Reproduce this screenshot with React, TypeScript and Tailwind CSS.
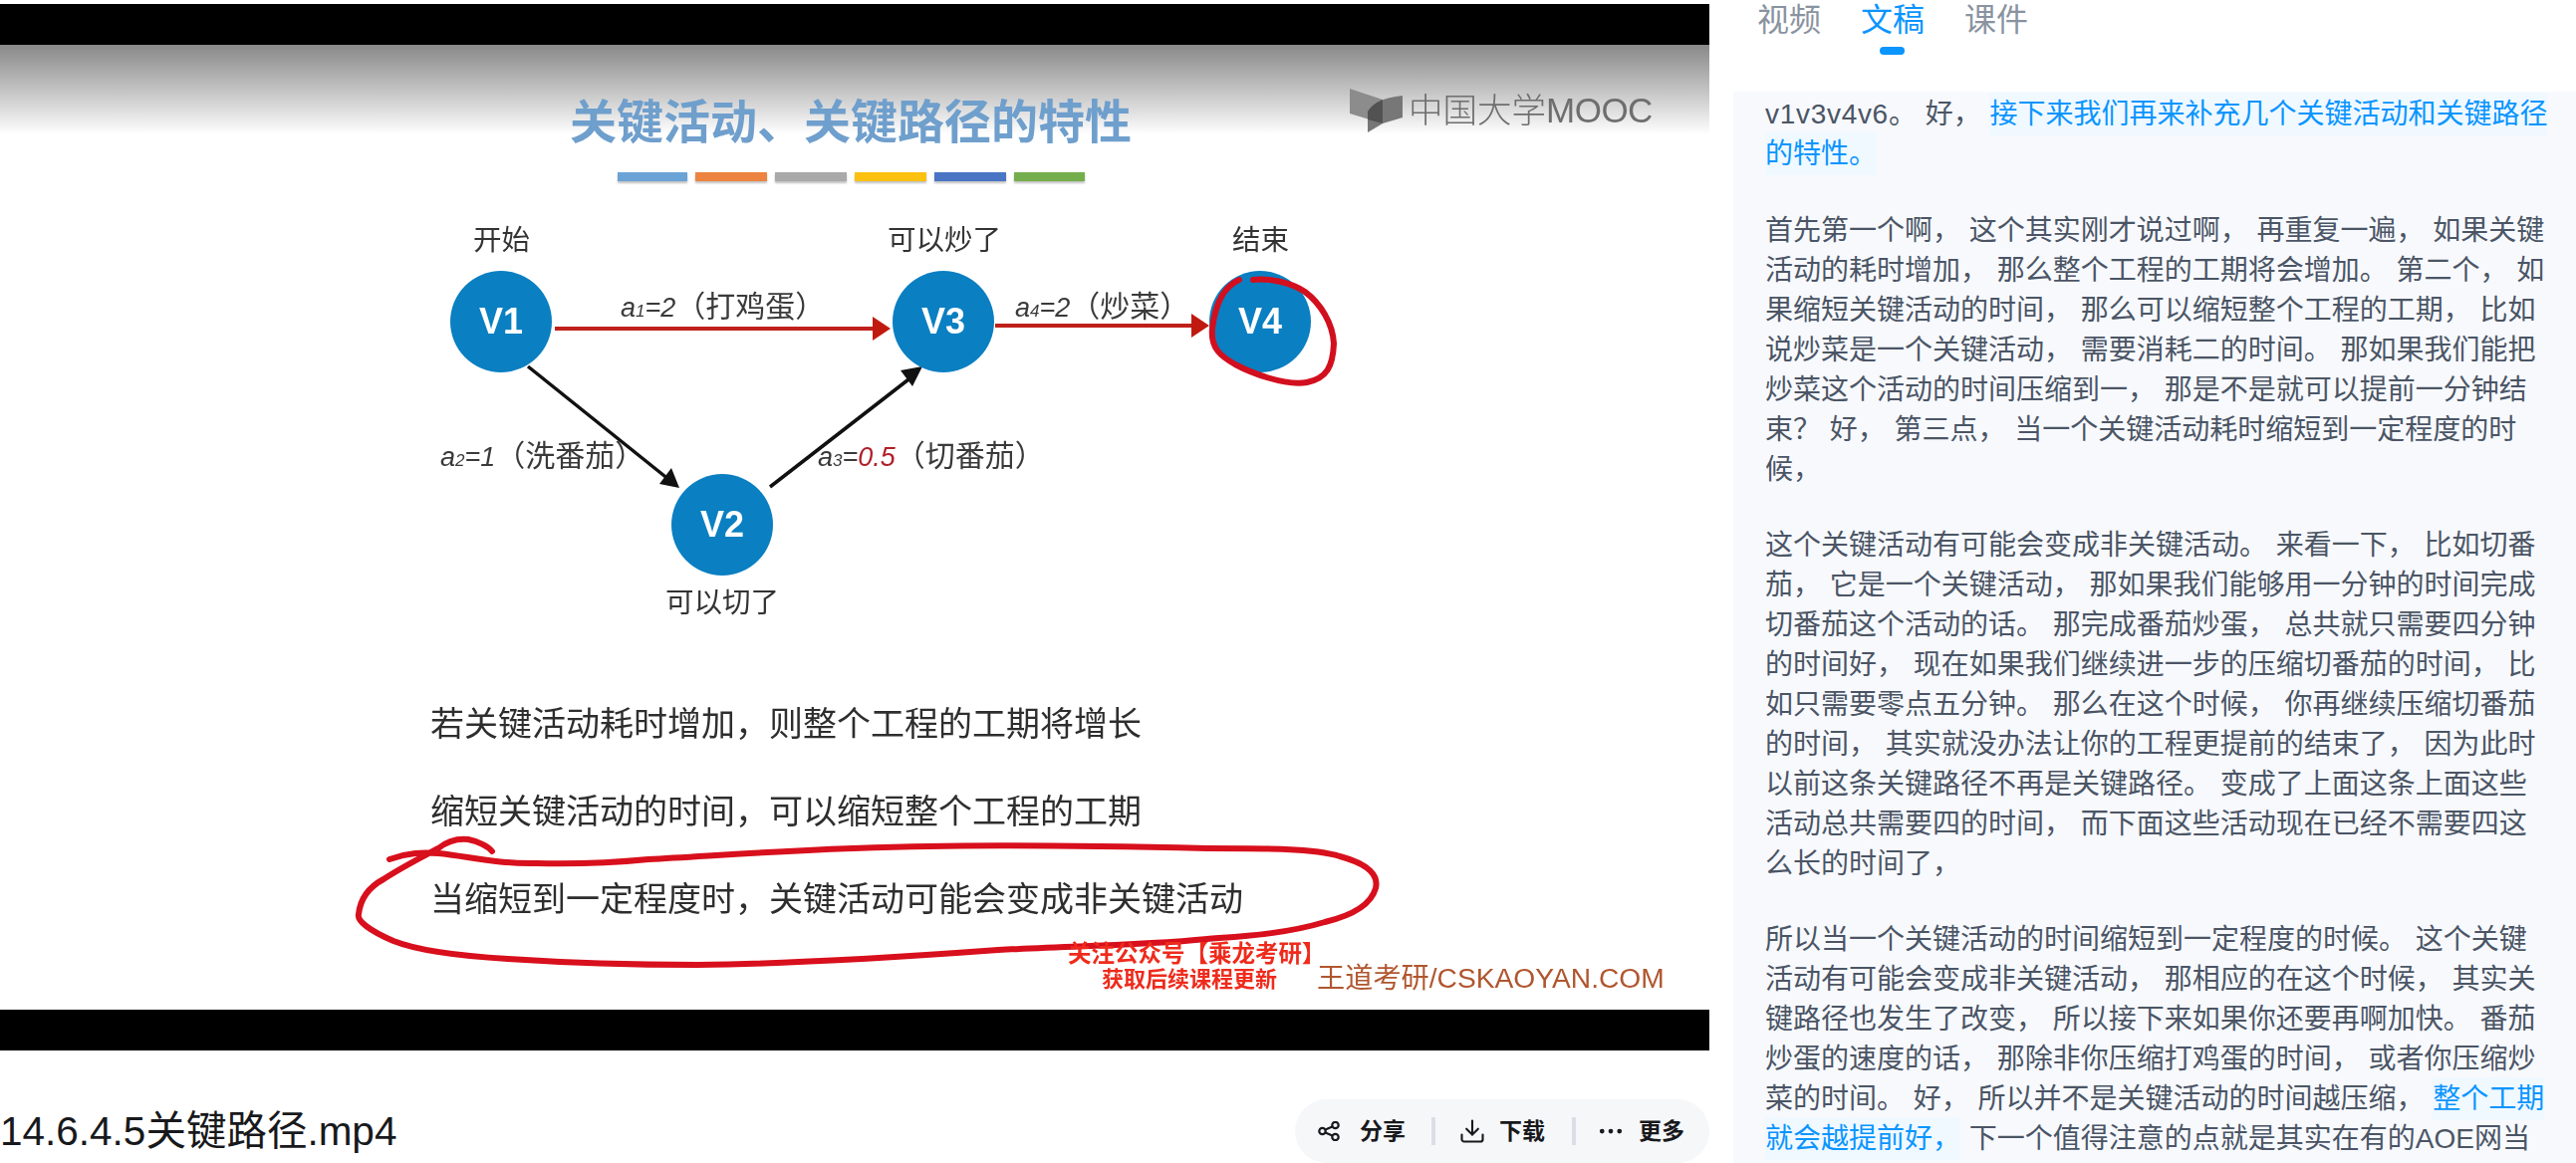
import { Download, Ellipsis } from "lucide-react";

// 幻灯片标题下的色条
const colorBars = [
  { width: "w-[70px]", color: "bg-[#6ba3d6]" },
  { width: "w-[72px]", color: "bg-[#ed8340]" },
  { width: "w-[72px]", color: "bg-[#a9a9a9]" },
  { width: "w-[72px]", color: "bg-[#fcc010]" },
  { width: "w-[72px]", color: "bg-[#4a75c4]" },
  { width: "w-[71px]", color: "bg-[#74ae4c]" },
];

function Node({ label, className }: { label: string; className: string }) {
  return (
    <div
      className={`absolute flex h-[102px] w-[102px] items-center justify-center rounded-full bg-[#0a7fc2] text-[36px] font-bold text-white ${className}`}
    >
      {label}
    </div>
  );
}

function Label({ text, className }: { text: string; className: string }) {
  return (
    <div className={`absolute whitespace-nowrap text-[28.5px] leading-[36px] text-[#333333] ${className}`}>{text}</div>
  );
}

function Weight({ name, value, task, className, red }: { name: string; value: string; task: string; className: string; red?: boolean }) {
  return (
    <div className={`absolute flex items-baseline whitespace-nowrap text-[27px] leading-[36px] text-[#3a3a3a] ${className}`}>
      <span className="italic">a</span>
      <sub className="static text-[17px] italic leading-none">{name}</sub>
      <span className="italic">=</span>
      <span className={red ? "italic text-[#b0202a]" : "italic"}>{value}</span>
      <span className="text-[30px]">（{task}）</span>
    </div>
  );
}

function Arrows() {
  return (
    <svg className="absolute left-0 top-0" width="1716" height="1055" viewBox="0 0 1716 1055" fill="none">
      <line x1="557" y1="330" x2="880" y2="330" stroke="#c0201a" strokeWidth="4" />
      <path d="M876 318 L894 330 L876 342 Z" fill="#c01a10" />
      <line x1="999" y1="327" x2="1198" y2="327" stroke="#c0201a" strokeWidth="4" />
      <path d="M1196 315 L1214 327 L1196 339 Z" fill="#c01a10" />
      <line x1="530" y1="368" x2="672" y2="482" stroke="#111111" strokeWidth="3.5" />
      <path d="M682 490 L662 486 L674 470 Z" fill="#111111" />
      <line x1="773" y1="489" x2="916" y2="378" stroke="#111111" strokeWidth="3.5" />
      <path d="M926 368 L916 388 L904 372 Z" fill="#111111" />
      {/* MOOC 书本图标 */}
      <path d="M1355 89 L1388 100 L1388 124 L1355 114 Z" fill="#8c8c8c" />
      <path d="M1373 133 L1373 112 C1378 104 1388 98 1408 96 L1408 118 L1388 124 Z" fill="#777777" />
      <path d="M1373 112 C1376 107 1381 103 1388 100 L1388 124 L1373 120 Z" fill="#525252" />
    </svg>
  );
}

// 老师手写的红圈，盖在节点和文字上面
function RedInk() {
  return (
    <svg className="absolute left-0 top-0" width="1716" height="1055" viewBox="0 0 1716 1055" fill="none">
      <path
        d="M1244 281 C1228 288 1220 305 1217 330 C1215 350 1226 358 1240 366 C1255 374 1290 388 1312 384 C1332 380 1338 368 1339 345 C1338 325 1326 305 1310 293 C1295 283 1272 279 1258 281"
        stroke="#d20f1e"
        strokeWidth="6"
        strokeLinecap="round"
      />
      <path
        d="M391 863 C410 856 425 856 440 857 C470 860 500 868 539 867 C580 868 610 867 651 863 C740 858 830 851 932 850 C1020 848 1120 850 1212 852 C1270 852 1320 852 1345 860 C1375 868 1384 880 1381 892 C1376 910 1355 920 1330 926 C1290 938 1250 940 1212 943 C1140 950 1070 950 1002 954 C920 960 800 968 700 969 C630 969 570 967 510 963 C460 960 420 955 395 945 C372 935 358 925 360 918 C362 900 372 890 385 883 C405 870 425 860 440 852 C450 844 460 842 470 843 C480 845 490 850 494 855"
        stroke="#d80f1c"
        strokeWidth="6"
        strokeLinecap="round"
      />
    </svg>
  );
}

function Slide() {
  return (
    <div className="relative h-[1055px] w-[1716px] overflow-hidden blur-[0.5px]">
      <div className="h-[4px] bg-white" />
      <div className="h-[41px] bg-black" />
      <div className="h-[90px] bg-gradient-to-b from-[#898989] to-white" />
      <div className="h-[879px] bg-white" />
      <div className="h-[41px] bg-black" />

      <div className="absolute left-[572px] top-[93px] whitespace-nowrap text-[47px] font-bold leading-[60px] text-[#6f9fcc]">
        关键活动、关键路径的特性
      </div>
      <div className="absolute left-[620px] top-[173px] flex gap-[8px]">
        {colorBars.map((bar) => (
          <div key={bar.color} className={`h-[9px] shadow-[0_2px_2px_rgba(0,0,0,0.25)] ${bar.width} ${bar.color}`} />
        ))}
      </div>

      <Arrows />

      <Node label="V1" className="left-[452px] top-[272px]" />
      <Node label="V3" className="left-[896px] top-[272px]" />
      <Node label="V4" className="left-[1214px] top-[272px]" />
      <Node label="V2" className="left-[674px] top-[476px]" />

      <Label text="开始" className="left-[475px] top-[223px]" />
      <Label text="可以炒了" className="left-[891px] top-[223px]" />
      <Label text="结束" className="left-[1237px] top-[223px]" />
      <Label text="可以切了" className="left-[668px] top-[587px]" />

      <Weight name="1" value="2" task="打鸡蛋" className="left-[623px] top-[290px]" />
      <Weight name="4" value="2" task="炒菜" className="left-[1019px] top-[290px]" />
      <Weight name="2" value="1" task="洗番茄" className="left-[442px] top-[440px]" />
      <Weight name="3" value="0.5" task="切番茄" className="left-[821px] top-[440px]" red />

      <div className="absolute left-[432px] top-[702px] whitespace-nowrap text-[34px] leading-[50px] text-[#2e2e2e]">
        若关键活动耗时增加，则整个工程的工期将增长
      </div>
      <div className="absolute left-[432px] top-[790px] whitespace-nowrap text-[34px] leading-[50px] text-[#2e2e2e]">
        缩短关键活动的时间，可以缩短整个工程的工期
      </div>
      <div className="absolute left-[432px] top-[878px] whitespace-nowrap text-[34px] leading-[50px] text-[#2e2e2e]">
        当缩短到一定程度时，关键活动可能会变成非关键活动
      </div>

      <RedInk />

      <div className="absolute left-[1072px] top-[943px] whitespace-nowrap text-[23.5px] font-bold leading-[30px] text-[#ee2b1c]">
        关注公众号【乘龙考研】
      </div>
      <div className="absolute left-[1106px] top-[969px] whitespace-nowrap text-[22px] font-bold leading-[30px] text-[#ee2b1c]">
        获取后续课程更新
      </div>
      <div className="absolute left-[1322px] top-[965px] whitespace-nowrap text-[28.2px] leading-[34px] text-[#b0562e]">
        王道考研/CSKAOYAN.COM
      </div>

      <div className="absolute left-[1414px] top-[88px] flex items-center whitespace-nowrap text-[34.5px] font-light leading-[46px] text-[#6e6e6e]">
        中国大学<span className="text-[35px] tracking-[-0.5px]">MOOC</span>
      </div>
    </div>
  );
}

function ShareIcon() {
  return (
    <svg width="22" height="20" viewBox="0 0 22 20" fill="none" stroke="currentColor" strokeWidth="2.2">
      <circle cx="4.5" cy="10" r="3.2" />
      <circle cx="17.5" cy="4" r="3.2" />
      <circle cx="17.5" cy="16" r="3.2" />
      <path d="M7.5 8.6 L14.5 5.4 M7.5 11.4 L14.5 14.6" />
    </svg>
  );
}

function Divider({ className }: { className: string }) {
  return <div className={`h-[28px] w-[4px] bg-[#dcdee6] ${className}`} />;
}

function Actions() {
  return (
    <div className="flex h-[64px] w-[416px] items-center rounded-[32px] bg-[#f6f7f9] pl-[23px] text-[23px] font-semibold text-[#18191c]">
      <ShareIcon />
      <span className="ml-[20px]">分享</span>
      <Divider className="ml-[26px]" />
      <Download size={28} strokeWidth={1.8} className="ml-[23px]" />
      <span className="ml-[13px]">下载</span>
      <Divider className="ml-[27px]" />
      <Ellipsis size={30} strokeWidth={1.8} className="ml-[20px]" />
      <span className="ml-[13px]">更多</span>
    </div>
  );
}

function Hl({ children }: { children: React.ReactNode }) {
  return <span className="bg-[#f0f9ff] py-[6px] text-[#0a95ff]">{children}</span>;
}

function Transcript() {
  return (
    <div className="flex-1 overflow-hidden bg-[#f7f9fd] pl-[32px] pt-[3px] text-[28px] leading-[40px] text-[#4b5565] [word-spacing:1px]">
      <p className="mb-[37px] whitespace-nowrap">
        <span className="tracking-[0.7px]">v1v3v4v6</span>。 好， <Hl>接下来我们再来补充几个关键活动和关键路径</Hl>
        <br />
        <Hl>的特性。</Hl>
      </p>
      <p className="mb-[36px] whitespace-nowrap">
        首先第一个啊， 这个其实刚才说过啊， 再重复一遍， 如果关键
        <br />
        活动的耗时增加， 那么整个工程的工期将会增加。 第二个， 如
        <br />
        果缩短关键活动的时间， 那么可以缩短整个工程的工期， 比如
        <br />
        说炒菜是一个关键活动， 需要消耗二的时间。 那如果我们能把
        <br />
        炒菜这个活动的时间压缩到一， 那是不是就可以提前一分钟结
        <br />
        束？ 好， 第三点， 当一个关键活动耗时缩短到一定程度的时
        <br />
        候，
      </p>
      <p className="mb-[36px] whitespace-nowrap">
        这个关键活动有可能会变成非关键活动。 来看一下， 比如切番
        <br />
        茄， 它是一个关键活动， 那如果我们能够用一分钟的时间完成
        <br />
        切番茄这个活动的话。 那完成番茄炒蛋， 总共就只需要四分钟
        <br />
        的时间好， 现在如果我们继续进一步的压缩切番茄的时间， 比
        <br />
        如只需要零点五分钟。 那么在这个时候， 你再继续压缩切番茄
        <br />
        的时间， 其实就没办法让你的工程更提前的结束了， 因为此时
        <br />
        以前这条关键路径不再是关键路径。 变成了上面这条上面这些
        <br />
        活动总共需要四的时间， 而下面这些活动现在已经不需要四这
        <br />
        么长的时间了，
      </p>
      <p className="whitespace-nowrap">
        所以当一个关键活动的时间缩短到一定程度的时候。 这个关键
        <br />
        活动有可能会变成非关键活动， 那相应的在这个时候， 其实关
        <br />
        键路径也发生了改变， 所以接下来如果你还要再啊加快。 番茄
        <br />
        炒蛋的速度的话， 那除非你压缩打鸡蛋的时间， 或者你压缩炒
        <br />
        菜的时间。 好， 所以并不是关键活动的时间越压缩， <Hl>整个工期</Hl>
        <br />
        <Hl>就会越提前好，</Hl> 下一个值得注意的点就是其实在有的AOE网当
      </p>
    </div>
  );
}

export default function App() {
  return (
    <div className="flex h-[1168px] w-[2586px] overflow-hidden bg-white font-['Liberation_Sans','Noto_Sans_CJK_SC',sans-serif]">
      <div className="flex w-[1716px] flex-col">
        <Slide />
        <div className="mt-[49px] flex items-center justify-between">
          <h1 className="whitespace-nowrap text-[40.5px] font-normal leading-[50px] text-[#18191c]">14.6.4.5关键路径.mp4</h1>
          <Actions />
        </div>
      </div>

      <div className="ml-[24px] flex flex-1 flex-col">
        <div className="flex h-[92px] gap-[40px] pl-[24px] text-[32px] leading-[40px] text-[#8a93a0]">
          <span>视频</span>
          <span className="relative text-[#0a95ff]">
            文稿
            <span className="absolute left-[19px] top-[47px] h-[8px] w-[25px] rounded-full bg-[#0a95ff]" />
          </span>
          <span>课件</span>
        </div>
        <Transcript />
      </div>
    </div>
  );
}
